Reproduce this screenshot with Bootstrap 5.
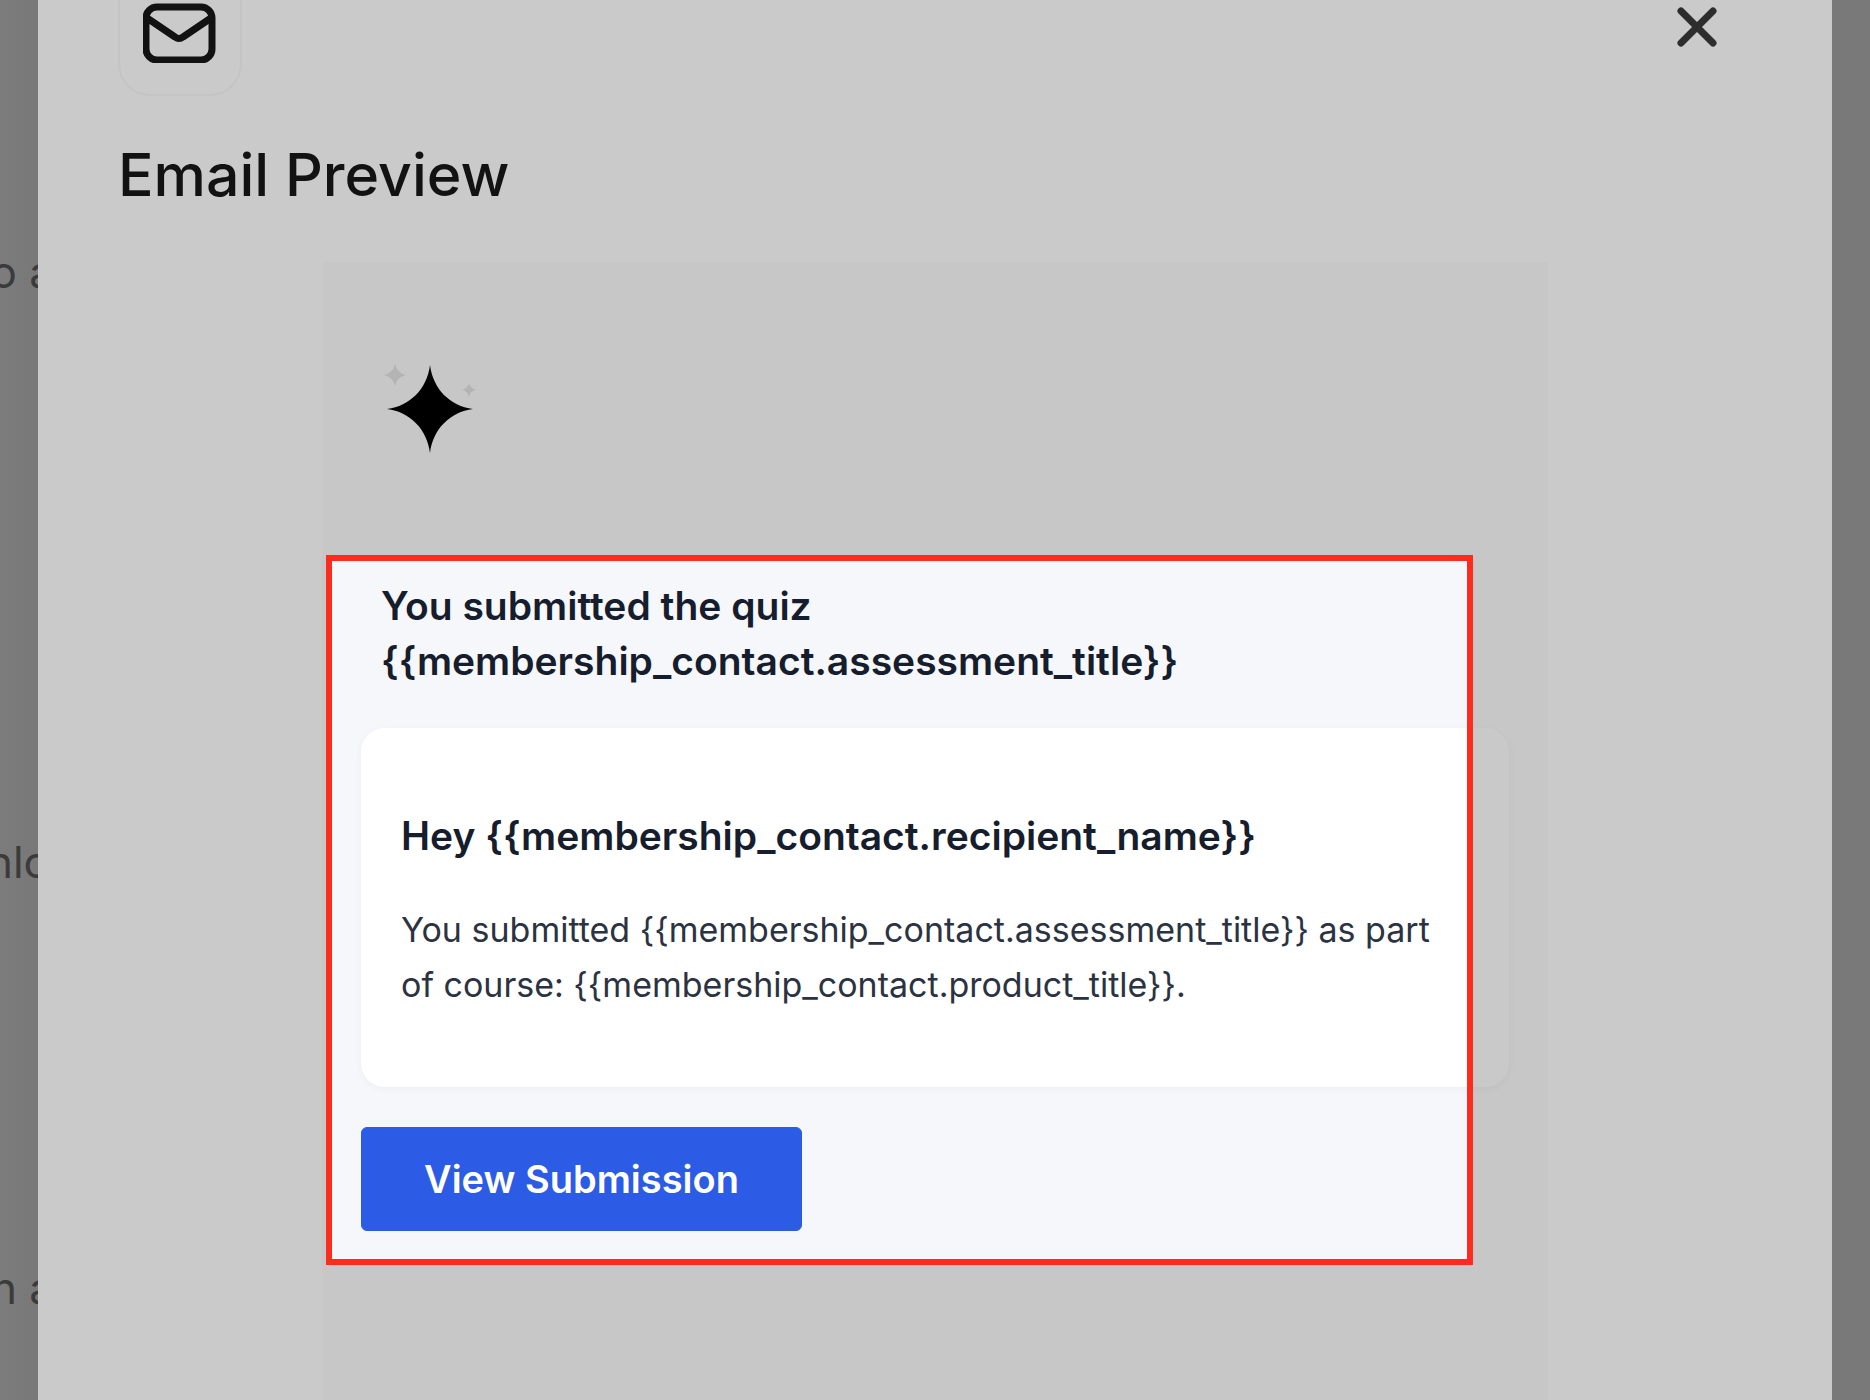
<!DOCTYPE html>
<html lang="en">
<head>
<meta charset="utf-8">
<meta name="viewport" content="width=device-width, initial-scale=1">
<title>Email Preview</title>
<link href="https://cdn.jsdelivr.net/npm/bootstrap@5.3.0/dist/css/bootstrap.min.css" rel="stylesheet">
<style>
  body { background: #7a7a7a; font-family: Inter, "Liberation Sans", sans-serif; color: #121212; }
  .page-edge { width: 38px; background: linear-gradient(to right, #7c7c7c, #787878); color: #3b3b3b; font-size: 44px; line-height: 56px; white-space: nowrap; }
  .page-edge.end-edge { background: #797979; }
  .page-edge p { margin: 0 -16px 370px 0; }
  .page-edge p:first-child { margin-top: 244px; margin-bottom: 534px; }
  .page-edge p.wide-line { margin-right: -12px; }
  .dialog-sheet { background: #cacaca; min-width: 0; }
  .dialog-head { padding: 0 100px 0 80px; height: 96px; }
  .icon-tile { width: 124px; border: 2px solid #c4c4c4; border-top: 0; border-radius: 0 0 32px 32px; padding-top: 3px; }
  .dialog-close { width: 70px; height: 54px; color: #2d2d2d; }
  .dialog-title { margin: 0; padding: 43px 80px 51px; font-size: 59px; line-height: 72px; font-weight: 500; }
  .mail-panel { background: #c7c7c7; width: 1226px; max-width: 100%; padding: 96px 75px 0 4px; }
  .brand-mark { display: block; margin: 0 0 97px 56px; }
  .spotlight { position: relative; background: #f6f7fb; color: #161d2d; padding: 23px 0 34px 35px; }
  .spotlight::after { content: ""; position: absolute; inset: 0; border: 6px solid #ff2b1c; pointer-events: none; }
  .mail-heading { font-size: 39px; line-height: 55px; font-weight: 600; margin: 0; }
  .quiz-heading { padding-left: 20px; margin-bottom: 40px; }
  .mail-sheet { margin-right: -36px; padding: 80px 40px 75px; border-radius: 24px; background: linear-gradient(to left, #c9c9c9 40px, #fff 40px); box-shadow: 0 2px 8px rgba(0,0,0,.04); }
  .mail-text { margin: 39px 0 0; font-size: 34px; line-height: 55px; color: #2b3342; }
  .submit-btn { --bs-btn-bg: #2c5be5; --bs-btn-color: #fff; --bs-btn-border-color: #2c5be5; --bs-btn-hover-bg: #244fce; --bs-btn-hover-color: #fff; margin-top: 40px; padding: 1px 62px 0; font-size: 38px; line-height: 101px; font-weight: 600; border-radius: 6px; }
</style>
<script src="https://cdn.jsdelivr.net/npm/bootstrap@5.3.0/dist/js/bootstrap.bundle.min.js"></script>
</head>
<body>
<div class="d-flex vh-100 overflow-hidden">
  <aside class="page-edge flex-shrink-0 overflow-hidden d-flex flex-column align-items-end">
    <p>o a</p>
    <p class="wide-line">nlo</p>
    <p>n a</p>
  </aside>
  <main class="dialog-sheet flex-grow-1 d-flex flex-column" role="dialog" aria-labelledby="dialogTitle">
    <header class="dialog-head d-flex justify-content-between align-items-start">
      <div class="icon-tile h-100 d-flex justify-content-center align-items-start">
        <svg width="74" height="60" viewBox="0 0 74 60" fill="none" stroke="#121212" stroke-width="7" stroke-linecap="round" stroke-linejoin="round" aria-hidden="true">
          <rect x="3" y="4" width="66" height="53" rx="11"/>
          <path d="M4 15 L32 34 Q36 37 40 34 L68 15"/>
        </svg>
      </div>
      <button type="button" class="dialog-close btn border-0 p-0" aria-label="Close">
        <svg width="40" height="40" viewBox="0 0 40 40" stroke="currentColor" stroke-width="7" stroke-linecap="round" aria-hidden="true"><path d="M4 4 L36 36 M36 4 L4 36"/></svg>
      </button>
    </header>
    <h1 class="dialog-title" id="dialogTitle">Email Preview</h1>
    <article class="mail-panel flex-grow-1 mx-auto">
      <svg class="brand-mark" width="96" height="100" viewBox="0 0 96 100" aria-hidden="true">
        <path fill="#000" d="M48 7 C51 31 68 48 91 51 C68 54 51 71 48 95 C45 71 28 54 5 51 C28 48 45 31 48 7 Z"/>
        <path fill="#b4b4b4" d="M13 6 Q15 15 24 17 Q15 19 13 28 Q11 19 2 17 Q11 15 13 6 Z M87 25 Q88 30 94 32 Q88 33 87 39 Q86 33 80 32 Q86 30 87 25 Z"/>
      </svg>
      <section class="spotlight">
        <h2 class="mail-heading quiz-heading">You submitted the quiz<br>{{membership_contact.assessment_title}}</h2>
        <div class="mail-sheet">
          <h3 class="mail-heading">Hey {{membership_contact.recipient_name}}</h3>
          <p class="mail-text">You submitted {{membership_contact.assessment_title}} as part of course: {{membership_contact.product_title}}.</p>
        </div>
        <button type="button" class="btn submit-btn">View Submission</button>
      </section>
    </article>
  </main>
  <div class="page-edge end-edge flex-shrink-0"></div>
</div>
</body>
</html>
